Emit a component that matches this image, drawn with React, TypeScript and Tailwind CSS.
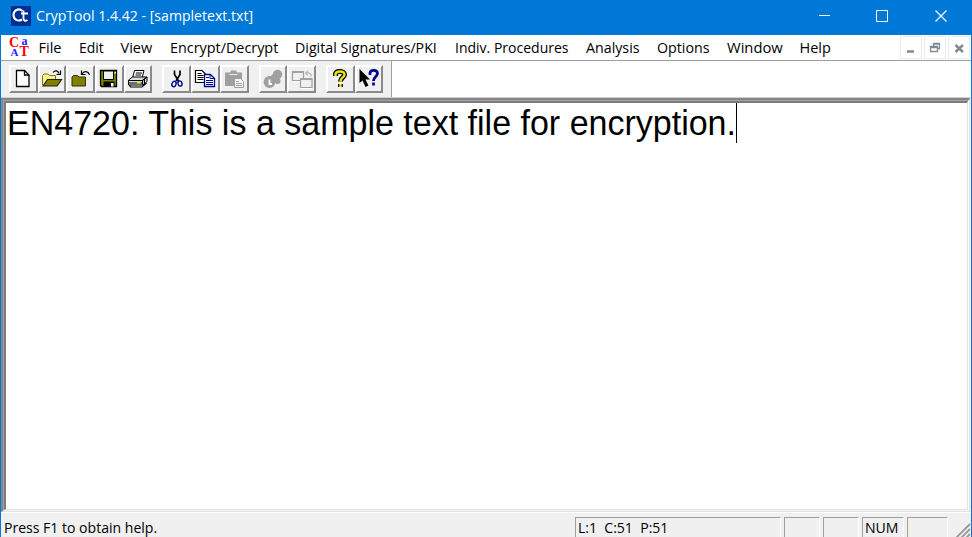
import { useLayoutEffect, useRef, type ReactNode } from "react";

function Fit({ width, className = "", children }: { width: number; className?: string; children: ReactNode }) {
  const ref = useRef<HTMLSpanElement>(null);
  useLayoutEffect(() => {
    const el = ref.current;
    if (el) el.style.transform = `scaleX(${width / el.offsetWidth})`;
  }, [width]);
  return (
    <span className="block shrink-0" style={{ width }}>
      <span ref={ref} className={`inline-block origin-left whitespace-pre ${className}`}>{children}</span>
    </span>
  );
}

const menus: [string, number, string][] = [
  ["File", 23, "mr-[17px]"],
  ["Edit", 25, "mr-[17px]"],
  ["View", 32, "mr-[17px]"],
  ["Encrypt/Decrypt", 108, "mr-[17px]"],
  ["Digital Signatures/PKI", 142, "mr-[18px]"],
  ["Indiv. Procedures", 114, "mr-[17px]"],
  ["Analysis", 54, "mr-[17px]"],
  ["Options", 53, "mr-[17px]"],
  ["Window", 56, "mr-[17px]"],
  ["Help", 31, ""],
];

function ToolButton({ children }: { children: ReactNode }) {
  return (
    <div className="flex h-[28px] w-[28.7px] shrink-0 items-center justify-center border-2 border-t-white border-r-[#8a8a8a] border-b-[#8a8a8a] border-l-white bg-[#f0f0f0]">
      <svg width="22" height="20" viewBox="0 0 22 20" className="shrink-0">{children}</svg>
    </div>
  );
}

const NewIcon = () => (
  <g>
    <path d="M4.500 1.500h8l4.500 4.500v11.500h-12.500z" fill="white" stroke="black" strokeWidth="1.300" />
    <path d="M12.500 1.500v4.500h4.500" fill="none" stroke="black" strokeWidth="1.300" />
  </g>
);
const OpenIcon = () => (
  <g>
    <path d="M1.500 16V6.500l1.500-1.500h4l1.500 1.500h6v4" fill="#f6f38a" stroke="#77770a" />
    <path d="M2 17l4.500-6.500H20.500l-4.500 6.500z" fill="#808000" stroke="#222200" strokeWidth="1.200" />
    <path d="M12 3.500c2-2.500 5-2 6 1M19.500 1.500v4h-4" fill="none" stroke="black" strokeWidth="1.200" />
  </g>
);
const CloseIcon = () => (
  <g>
    <path d="M2 17V8l1.500-1.500h4L9 8h6.500v9z" fill="#808000" stroke="#333300" />
    <path d="M12 5c2-3.500 6-3 7.500 .8M11.500 1.500v4h4" fill="none" stroke="black" strokeWidth="1.200" />
  </g>
);
const SaveIcon = () => (
  <g>
    <path d="M2.500 1.500h16v16h-15l-1-1z" fill="#808000" stroke="black" strokeWidth="1.300" />
    <path d="M5.500 2h10v8.500h-10z" fill="#f0f0f0" stroke="black" />
    <path d="M5.500 12.500h11v5h-11z" fill="black" />
    <path d="M13 14h2.500v3.500H13zM16.500 3H18v1.500h-1.500z" fill="white" />
  </g>
);
const PrintIcon = () => (
  <g stroke="black">
    <path d="M5.500 9l2-7.500h9.500L15 9z" fill="white" />
    <path d="M9 4h6M8.500 6h5.500" />
    <path d="M1.500 11l4-3h14.500v4.500l-4 3.500H1.500z" fill="#ddd" />
    <path d="M1.500 11.500h14l4.500-3.500M15.500 11.500V16M2.500 16l1 2h11.500l4.500-4" fill="none" strokeWidth="1.200" />
    <path d="M2 14h13M17.500 10v5" />
    <path d="M10 13.500h3.500" stroke="#f2e900" strokeWidth="2" />
  </g>
);
const CutIcon = () => (
  <g fill="none">
    <path d="M8.500 1.500v4l4 6.500M14 1.500v4L10 12" stroke="black" strokeWidth="1.700" />
    <ellipse cx="8" cy="15" rx="2" ry="2.800" stroke="#000090" strokeWidth="1.400" transform="rotate(20 8 15)" />
    <ellipse cx="14" cy="14.500" rx="2" ry="2.600" stroke="#000090" strokeWidth="1.400" transform="rotate(-15 14 14.500)" />
  </g>
);
const CopyIcon = () => (
  <g>
    <path d="M1.500 1.500h6.500l3 3v9h-9.500z" fill="white" stroke="black" strokeWidth="1.200" />
    <path d="M3.500 4.500h4M3.500 6.500h6M3.500 8.500h6M3.500 10.500h6" stroke="black" />
    <path d="M10.500 5.500h6l4 4v8h-10z" fill="white" stroke="#000090" strokeWidth="1.300" />
    <path d="M16 5.500v4h4M12 8.500h3M12 11.500h7M12 13.500h7M12 15.500h7" fill="none" stroke="#000090" />
  </g>
);
const PasteIcon = () => (
  <g>
    <path d="M2 3.500h5l1-2h5l1 2h5V17H2z" fill="#a0a0a0" />
    <path d="M6.500 5.500h8" stroke="#ededed" />
    <path d="M11.500 9.500h6l3 3v6h-9z" fill="#f6f6f6" stroke="#a0a0a0" />
    <path d="M13 12.500h3M13 14.500h6M13 16.500h6" stroke="#a0a0a0" />
  </g>
);
const KeyIcon = () => (
  <g>
    <circle cx="15.500" cy="5.500" r="4.700" fill="#a0a0a0" />
    <circle cx="7.500" cy="13" r="5.900" fill="#a0a0a0" />
    <circle cx="15.500" cy="12" r="3" fill="#a0a0a0" />
    <path d="M8 7.500l4-3 5 6-4 3z" fill="#a0a0a0" />
    <path d="M7.500 10.500v4.500h2.500" fill="none" stroke="white" strokeWidth="1.900" />
  </g>
);
const WindowsIcon = () => (
  <g fill="none" stroke="#a0a0a0">
    <path d="M1.500 2.500h11v9h-11zM1.500 3.500h11" strokeWidth="1.200" />
    <path d="M9.500 9.500h11.500v9H9.500zM9.500 10.500h11.500" fill="#f0f0f0" strokeWidth="1.200" />
    <path d="M20 7.500V5l-2-1h-3M17 1.500L14.500 4 17 6.500" />
    <path d="M2 12.700h7M10 19.500h11" stroke="white" />
  </g>
);
const HelpMark = () => (
  <g fill="none" strokeLinejoin="round">
    <path d="M6.500 7V5C7 1.500 15.500 1.500 15.500 5.500c0 3-4 3-4 7M11.500 15v3" stroke="black" strokeWidth="5" />
    <path d="M6.500 7V5C7 1.500 15.500 1.500 15.500 5.500c0 3-4 3-4 7M11.500 15v3" stroke="#eee500" strokeWidth="2.400" />
  </g>
);
const ContextHelp = () => (
  <g>
    <path d="M1.500 0v14l3-2.500L7.500 18l3-1.500-3-6H12z" fill="black" />
    <path d="M12 6V4C12.500 .5 19.500 .5 19.500 4.500c0 3-4 3-4 7.500M15.500 13.500V16.500" fill="none" stroke="#000090" strokeWidth="2.700" />
  </g>
);

function Caption({ children, last }: { children: ReactNode; last?: boolean }) {
  return (
    <div className={`h-[23px] w-[22px] border border-[#ebebeb] bg-white ${last ? "" : "mr-[2px]"}`}>
      <svg width="20" height="21" viewBox="0 0 20 21" fill="none" stroke="#7d8b99">{children}</svg>
    </div>
  );
}

const pane = "h-[21px] shrink-0 border-t border-l border-r border-t-[#a0a0a0] border-l-[#a0a0a0] border-r-white";

export default function App() {
  return (
    <div className="flex h-[537px] w-[972px] flex-col overflow-hidden border-x border-[#0078d7] bg-[#f0f0f0] font-['Open_Sans','Noto_Sans',sans-serif] text-black">
      <header className="flex h-[35px] shrink-0 items-center bg-[#0078d7] pl-[10px] text-white">
        <svg width="20" height="20" viewBox="0 0 20 20" className="mr-[5px] mb-[3px]">
          <path d="M0 0h20v20H0z" fill="#002f91" />
          <path d="M11.500 5C7.500 1.500 2.500 4.500 2.500 9c0 4.500 4.500 7 8.500 4.500" fill="none" stroke="white" strokeWidth="2.100" />
          <path d="M12.500 4.500v8c0 2 1.500 3 4 1.500M10 7.500h7" fill="none" stroke="white" strokeWidth="1.800" />
        </svg>
        <Fit width={217} className="-translate-y-[3px] text-[15px] leading-[30px]">CrypTool 1.4.42 - [sampletext.txt]</Fit>
        <svg width="140" height="35" viewBox="0 0 140 35" className="mr-[12px] ml-auto" fill="none" stroke="white">
          <path d="M-1 15.500h12M57.500 10.500h11v11h-11z" />
          <path d="M116.500 10.500l11 11M127.500 10.500l-11 11" strokeWidth="1.200" />
        </svg>
      </header>
      <nav className="flex h-[25px] shrink-0 items-center bg-white pl-[8px]">
        <svg width="21" height="22" viewBox="0 0 21 22" className="mr-[8.5px] shrink-0 overflow-visible font-['Liberation_Serif',serif] font-bold">
          <text x="0" y="9.500" fontSize="14" fill="#f00">C</text>
          <text x="12.500" y="8" fontSize="12" fill="#22f">a</text>
          <text x="1.500" y="19" fontSize="11" fill="#22f">A</text>
          <text x="10.500" y="19" fontSize="14" fill="#f00">T</text>
        </svg>
        {menus.map(([label, width, gap]) => (
          <div key={label} className={gap}><Fit width={width} className="text-[14.5px] leading-[24px]">{label}</Fit></div>
        ))}
        <div className="ml-auto flex pr-px">
          <Caption><path d="M6 14.500h7" strokeWidth="2.500" /></Caption>
          <Caption><path d="M5.500 9.500h7v5h-7zM5 10.500h8M8.500 9V6.500h6v5H13M8 7h7" strokeWidth="1.300" /></Caption>
          <Caption last><path d="M6.500 8l7.500 7M14 8l-7.500 7" strokeWidth="2.500" /></Caption>
        </div>
      </nav>
      <div className="flex h-[37px] shrink-0 border-t border-[#a0a0a0] bg-white">
        <div className="flex w-[391px] shrink-0 border-r border-[#a0a0a0] bg-[#f0f0f0] pt-[4px] pl-[8px]">
          <ToolButton><NewIcon /></ToolButton>
          <ToolButton><OpenIcon /></ToolButton>
          <ToolButton><CloseIcon /></ToolButton>
          <ToolButton><SaveIcon /></ToolButton>
          <ToolButton><PrintIcon /></ToolButton>
          <div className="w-[10px]" />
          <ToolButton><CutIcon /></ToolButton>
          <ToolButton><CopyIcon /></ToolButton>
          <ToolButton><PasteIcon /></ToolButton>
          <div className="w-[10px]" />
          <ToolButton><KeyIcon /></ToolButton>
          <ToolButton><WindowsIcon /></ToolButton>
          <div className="w-[10px]" />
          <ToolButton><HelpMark /></ToolButton>
          <ToolButton><ContextHelp /></ToolButton>
        </div>
      </div>
      <main className="flex h-[416px] shrink-0 border-t border-r border-b border-t-[#d0d0d0] border-r-[#f0f0f0] border-b-white">
        <div className="flex grow border-t-2 border-r border-b border-l-2 border-t-[#858585] border-r-[#e3e3e3] border-b-[#e3e3e3] border-l-[#858585]">
          <div className="flex grow border border-t-[#a3a3a3] border-r-white border-b-[#f4f4f4] border-l-[#a3a3a3]">
            <div className="flex grow border-t-2 border-r border-b border-l-2 border-t-[#7b7b7b] border-r-[#e3e3e3] border-b-[#e3e3e3] border-l-[#7b7b7b] bg-white pl-px">
              <Fit width={729} className="-translate-y-px font-['Liberation_Sans',Arial,sans-serif] text-[35.500px] leading-[42px]">EN4720: This is a sample text file for encryption.</Fit>
              <div className="h-[40px] w-px bg-black" />
            </div>
          </div>
        </div>
      </main>
      <footer className="flex h-[24px] shrink-0 pt-[4px] pl-[2.500px] text-[14.500px] leading-[21px]">
        <Fit width={153}>Press F1 to obtain help.</Fit>
        <div className={`ml-[418.500px] w-[206px] pl-[2px] ${pane}`}><Fit width={90} className="-translate-y-px">L:1  C:51  P:51</Fit></div>
        <div className={`ml-[3px] w-[36px] ${pane}`} />
        <div className={`ml-[3px] w-[36px] ${pane}`} />
        <div className={`ml-[3px] w-[42px] pl-[2px] ${pane}`}><Fit width={34} className="-translate-y-px">NUM</Fit></div>
        <div className={`ml-[3px] w-[41px] ${pane}`} />
        <svg width="16" height="21" viewBox="0 0 16 21" className="ml-auto" stroke="#999" strokeWidth="1.800"><path d="M1 21L15 7M6 21l9-9M11 21l4-4" /></svg>
      </footer>
    </div>
  );
}
